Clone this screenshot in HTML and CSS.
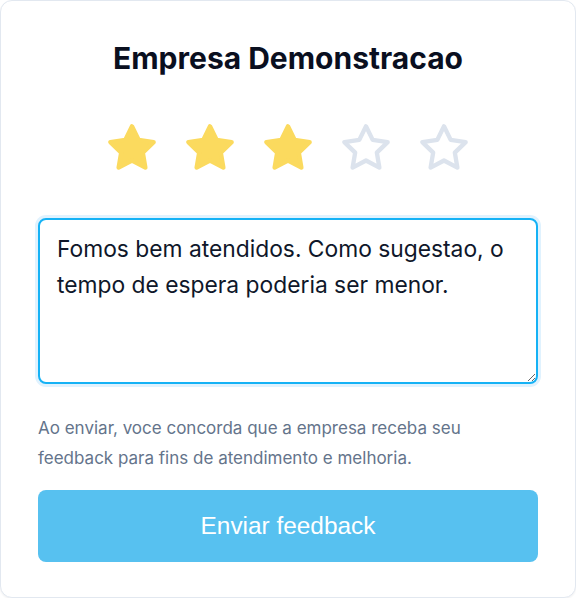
FILE: index.html
```html
<!DOCTYPE html>
<html lang="pt-BR">
<head>
  <meta charset="UTF-8" />
  <meta name="viewport" content="width=device-width, initial-scale=1" />
  <title>Avaliacao</title>
  <link rel="stylesheet" href="styles.css">
</head>
<body>

<main class="card">
  <h1 class="company">Empresa Demonstracao</h1>

  <div class="stars">
    <svg class="star on" viewBox="0 0 24 24"><polygon points="12 2 15.09 8.26 22 9.27 17 14.14 18.18 21.02 12 17.77 5.82 21.02 7 14.14 2 9.27 8.91 8.26 12 2"/></svg>
    <svg class="star on" viewBox="0 0 24 24"><polygon points="12 2 15.09 8.26 22 9.27 17 14.14 18.18 21.02 12 17.77 5.82 21.02 7 14.14 2 9.27 8.91 8.26 12 2"/></svg>
    <svg class="star on" viewBox="0 0 24 24"><polygon points="12 2 15.09 8.26 22 9.27 17 14.14 18.18 21.02 12 17.77 5.82 21.02 7 14.14 2 9.27 8.91 8.26 12 2"/></svg>
    <svg class="star" viewBox="0 0 24 24"><polygon points="12 2 15.09 8.26 22 9.27 17 14.14 18.18 21.02 12 17.77 5.82 21.02 7 14.14 2 9.27 8.91 8.26 12 2"/></svg>
    <svg class="star" viewBox="0 0 24 24"><polygon points="12 2 15.09 8.26 22 9.27 17 14.14 18.18 21.02 12 17.77 5.82 21.02 7 14.14 2 9.27 8.91 8.26 12 2"/></svg>
  </div>

  <textarea class="comment">Fomos bem atendidos. Como sugestao, o tempo de espera poderia ser menor.</textarea>

  <p class="notice">Ao enviar, voce concorda que a empresa receba seu feedback para fins de atendimento e melhoria.</p>

  <button class="send" type="button">Enviar feedback</button>
</main>

</body>
</html>
```

FILE: styles.css
```css
body {
  margin: 0;
  background: #ffffff;
  font-family: Inter, "Noto Sans", sans-serif;
  color: #0f172a;
}
.card {
  box-sizing: border-box;
  height: 598px;
  padding: 37px 37px 0;
  border: 1px solid #e2e8f0;
  border-radius: 12px;
  background: #fff;
  box-shadow: 0 1px 2px rgba(15, 23, 42, 0.06);
}
.company {
  margin: 0;
  font-size: 30px;
  font-weight: 700;
  line-height: 40px;
  text-align: center;
  color: #0a0f1f;
}
.stars {
  display: flex;
  justify-content: center;
  gap: 26px;
  margin-top: 44px;
}
.star {
  width: 52px;
  height: 52px;
  fill: none;
  stroke: #dce3ed;
  stroke-width: 2;
  stroke-linejoin: round;
  stroke-linecap: round;
}
.star.on {
  fill: #fbda5e;
  stroke: #fbda5e;
}
.comment {
  display: block;
  box-sizing: border-box;
  width: 100%;
  height: 166px;
  margin-top: 44px;
  padding: 11px 17px;
  border: 2px solid #15b2f5;
  border-radius: 8px;
  box-shadow: 0 0 0 3px #e0f2fe;
  outline: none;
  font-family: Inter, "Noto Sans", sans-serif;
  font-size: 22.8px;
  line-height: 36px;
  color: #0f172a;
  resize: vertical;
}
.notice {
  max-width: 480px;
  margin: 29px 0 0;
  font-size: 17px;
  line-height: 30px;
  color: #64748b;
}
.send {
  display: block;
  width: 100%;
  height: 72px;
  margin-top: 17px;
  border: none;
  border-radius: 8px;
  background: #57c1f0;
  color: #fff;
  font-family: "Liberation Sans", Arial, sans-serif;
  font-size: 24.4px;
  cursor: pointer;
}
```
